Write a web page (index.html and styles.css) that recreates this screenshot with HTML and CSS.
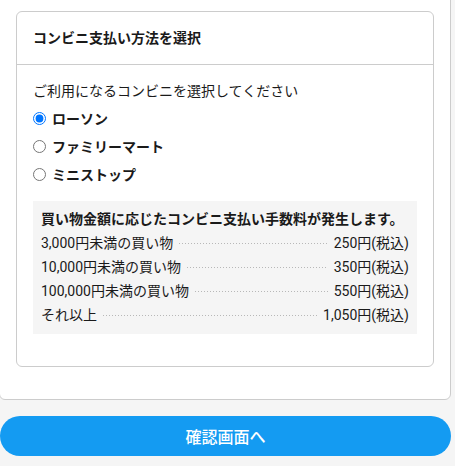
FILE: index.html
```html
<!DOCTYPE html>
<html lang="ja">
<head>
<meta charset="utf-8">
<link rel="stylesheet" href="styles.css">
</head>
<body>
<div class="page">
  <div class="outer-card">
    <section class="card">
      <h2 class="card-header">コンビニ支払い方法を選択</h2>
      <div class="card-body">
        <p class="intro">ご利用になるコンビニを選択してください</p>
        <label class="option"><input type="radio" name="cvs" checked><span>ローソン</span></label>
        <label class="option"><input type="radio" name="cvs"><span>ファミリーマート</span></label>
        <label class="option"><input type="radio" name="cvs"><span>ミニストップ</span></label>
        <div class="fee-box">
          <p class="fee-title">買い物金額に応じたコンビニ支払い手数料が発生します。</p>
          <div class="fee-row"><span>3,000円未満の買い物</span><span class="leader"></span><span>250円(税込)</span></div>
          <div class="fee-row"><span>10,000円未満の買い物</span><span class="leader"></span><span>350円(税込)</span></div>
          <div class="fee-row"><span>100,000円未満の買い物</span><span class="leader"></span><span>550円(税込)</span></div>
          <div class="fee-row"><span>それ以上</span><span class="leader"></span><span>1,050円(税込)</span></div>
        </div>
      </div>
    </section>
  </div>
  <button class="confirm" type="button">確認画面へ</button>
</div>
</body>
</html>
```

FILE: styles.css
```css
html, body {
  margin: 0;
  padding: 0;
  background: #f5f5f5;
}
body {
  font-family: Roboto, "Noto Sans CJK JP", sans-serif;
  font-size: 14px;
  color: #1a1a1a;
}
.page {
  width: 451px;
  display: flex;
  flex-direction: column;
}
.outer-card {
  margin: -22px 0 0 -1px;
  width: 452px;
  box-sizing: border-box;
  background: #fff;
  border: 1px solid #cccccc;
  border-radius: 6px;
  padding: 32px 16px 32px;
}
.card {
  border: 1px solid #cccccc;
  border-radius: 6px;
  background: #fff;
}
.card-header {
  margin: 0;
  padding: 16px 16px;
  font-size: 14px;
  font-weight: bold;
  line-height: 20px;
  border-bottom: 1px solid #cccccc;
}
.card-body {
  padding: 16px 16px 32px;
  display: flex;
  flex-direction: column;
}
.intro {
  margin: 0 0 3px;
  line-height: 20px;
}
.option {
  display: flex;
  align-items: center;
  height: 28px;
  font-weight: bold;
  cursor: pointer;
}
.option input {
  margin: 1px 6px 0 0;
  width: 13px;
  height: 13px;
}
.fee-box {
  margin-top: 13px;
  background: #f5f5f5;
  padding: 8px 8px 8px;
}
.fee-title {
  margin: 0;
  font-weight: bold;
  line-height: 21px;
}
.fee-row {
  display: flex;
  align-items: center;
  height: 24px;
  white-space: nowrap;
}
.leader {
  flex: 1;
  height: 1px;
  margin: 3px 6px 0;
  background-image: linear-gradient(to right, #b8b8b8 1px, transparent 1px);
  background-size: 3px 1px;
  background-repeat: repeat-x;
}
.confirm {
  margin-top: 16px;
  height: 40px;
  border: none;
  border-radius: 20px;
  background: #149bf2;
  color: #fff;
  font-family: Roboto, "Noto Sans CJK JP", sans-serif;
  font-size: 16px;
  font-weight: 500;
  width: 451px;
  padding: 0;
}
```
